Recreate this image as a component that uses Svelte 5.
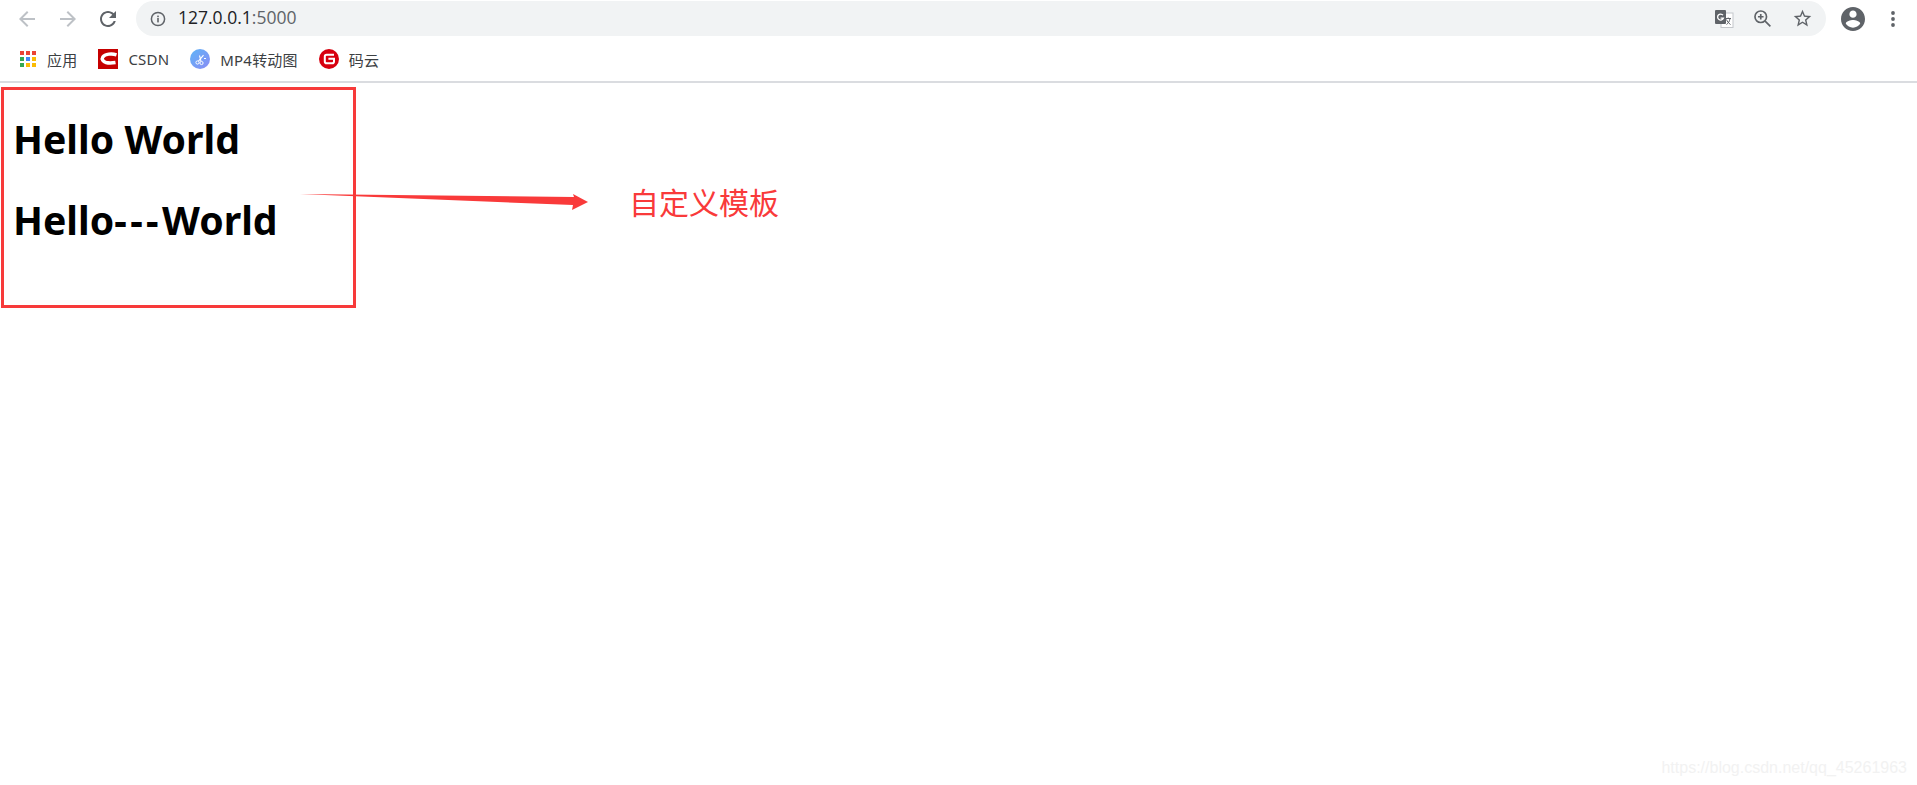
<script lang="ts">
  const bookmarks = [
    { id: "apps", label: "应用" },
    { id: "csdn", label: "CSDN" },
    { id: "mp4", label: "MP4转动图" },
    { id: "gitee", label: "码云" },
  ];
  const appDots = ["#ea4335", "#ea4335", "#ea4335", "#34a853", "#4285f4", "#fbbc05", "#34a853", "#fbbc05", "#fbbc05"];
</script>

<div class="root">
  <header class="chrome">
    <div class="toolbar">
      <svg class="nav" viewBox="0 0 24 24"><path fill="#bdc1c6" d="M20 11H7.83l5.59-5.59L12 4l-8 8 8 8 1.41-1.41L7.83 13H20v-2z" /></svg>
      <svg class="nav" viewBox="0 0 24 24"><path fill="#bdc1c6" d="M12 4l-1.41 1.41L16.17 11H4v2h12.17l-5.58 5.59L12 20l8-8z" /></svg>
      <svg class="nav reload" viewBox="0 0 24 24"><path fill="#5f6368" d="M17.65 6.35C16.2 4.9 14.21 4 12 4c-4.42 0-7.99 3.58-7.99 8s3.57 8 7.99 8c3.73 0 6.84-2.55 7.73-6h-2.08c-.82 2.33-3.04 4-5.65 4-3.31 0-6-2.69-6-6s2.69-6 6-6c1.66 0 3.14.69 4.22 1.78L13 11h7V4l-2.35 2.35z" /></svg>
      <div class="omnibox">
        <svg class="info" viewBox="0 0 16 16">
          <circle cx="8" cy="8" r="6.6" fill="none" stroke="#5f6368" stroke-width="1.5" />
          <rect x="7.2" y="7" width="1.6" height="4.4" fill="#5f6368" />
          <rect x="7.2" y="4.6" width="1.6" height="1.6" fill="#5f6368" />
        </svg>
        <span class="url">127.0.0.1<span class="port">:5000</span></span>
        <div class="omni-actions">
          <svg class="translate" viewBox="0 0 20 20">
            <rect x="7" y="4" width="12" height="14.5" fill="#fff" stroke="#c4c7cb" stroke-width="1" />
            <rect x="1" y="1" width="11" height="14" rx="1" fill="#5f6368" />
            <path d="M9 6.2a3 3 0 1 0 .4 3H6.6" fill="none" stroke="#fff" stroke-width="1.3" />
            <path d="M11.5 9.5h5.5M14.2 8.5v1M12.5 15.5c2-1.5 3-3 3.5-6M12.5 10.5c.8 2 2 3.5 4 5" fill="none" stroke="#5f6368" stroke-width="1" />
          </svg>
          <svg class="action" viewBox="0 0 24 24">
            <circle cx="10" cy="10" r="6.6" fill="none" stroke="#5f6368" stroke-width="1.9" />
            <path d="M15 15l6 6M10 6.8v6.4M6.8 10h6.4" fill="none" stroke="#5f6368" stroke-width="1.9" />
          </svg>
          <svg class="action star" viewBox="0 0 24 24"><path fill="#5f6368" d="M22 9.24l-7.19-.62L12 2 9.19 8.63 2 9.24l5.46 4.73L5.82 21 12 17.27 18.18 21l-1.63-7.03L22 9.24zM12 15.4l-3.76 2.27 1-4.28-3.32-2.88 4.38-.38L12 6.1l1.71 4.04 4.38.38-3.32 2.88 1 4.28L12 15.4z" /></svg>
        </div>
      </div>
      <svg class="account" viewBox="2 2 20 20"><path fill="#5f6368" d="M12 2C6.48 2 2 6.48 2 12s4.48 10 10 10 10-4.48 10-10S17.52 2 12 2zm0 3c1.66 0 3 1.34 3 3s-1.34 3-3 3-3-1.34-3-3 1.34-3 3-3zm0 14.2c-2.5 0-4.71-1.28-6-3.22.03-1.99 4-3.08 6-3.08 1.99 0 5.97 1.09 6 3.08-1.29 1.94-3.5 3.22-6 3.22z" /></svg>
      <svg class="menu" viewBox="0 0 6 18">
        <circle cx="3" cy="3" r="1.9" fill="#5f6368" />
        <circle cx="3" cy="9" r="1.9" fill="#5f6368" />
        <circle cx="3" cy="15" r="1.9" fill="#5f6368" />
      </svg>
    </div>
    <nav class="bookmarks">
      {#each bookmarks as b}
        <div class="bookmark {b.id}">
          {#if b.id === "apps"}
            <div class="app-grid">
              {#each appDots as c}
                <i style={`background:${c}`}></i>
              {/each}
            </div>
          {:else if b.id === "csdn"}
            <svg class="fav" viewBox="0 0 20 20">
              <rect width="20" height="20" fill="#c60000" />
              <path d="M18.5 5.8C14 4.4 7 4.8 4.8 8c-1.5 2.2.3 4.7 3.2 5.5 2.8.7 6.5.5 9.5 0" fill="none" stroke="#fff" stroke-width="3.4" />
            </svg>
          {:else if b.id === "mp4"}
            <svg class="fav" viewBox="0 0 20 20">
              <defs>
                <linearGradient id="mp4-bg" x1="0" y1="0" x2="1" y2="1">
                  <stop offset="0" stop-color="#5fb4f7" />
                  <stop offset="1" stop-color="#8a8cf5" />
                </linearGradient>
              </defs>
              <circle cx="10" cy="10" r="10" fill="url(#mp4-bg)" />
              <circle cx="7.5" cy="13.5" r="1.6" fill="none" stroke="#fff" stroke-width="1" />
              <circle cx="11.5" cy="14" r="1.6" fill="none" stroke="#fff" stroke-width="1" />
              <path d="M8.5 12.2l5-6M11 12.4L9.5 6.5M14 9.5h2" stroke="#fff" stroke-width="1.1" fill="none" />
            </svg>
          {:else}
            <svg class="fav" viewBox="0 0 20 20">
              <circle cx="10" cy="10" r="10" fill="#d7000f" />
              <path d="M15 5.8H7.6a1.8 1.8 0 0 0-1.8 1.8v4.8a1.8 1.8 0 0 0 1.8 1.8h5.6a1.8 1.8 0 0 0 1.8-1.8V9.8H9.4" fill="none" stroke="#fff" stroke-width="2" />
            </svg>
          {/if}
          <span>{b.label}</span>
        </div>
      {/each}
    </nav>
  </header>

  <main class="page">
    <h1>Hello World</h1>
    <h1>Hello<span class="dashes">---</span>World</h1>

    <div class="mark-box"></div>
    <svg class="mark-arrow" viewBox="0 0 300 24">
      <polygon fill="#f93a3a" points="0,2 274,5 273,2 288,10 272,18 273,13" />
    </svg>
    <span class="mark-label">自定义模板</span>
    <span class="watermark">https://blog.csdn.net/qq_45261963</span>
  </main>
</div>

<style>
  :global(body) {
    margin: 0;
    background: #fff;
  }

  .root {
    height: 100vh;
    overflow: hidden;
    display: flex;
    flex-direction: column;
    font-family: "Noto Sans", "Noto Sans CJK SC", sans-serif;
  }

  .chrome {
    flex-shrink: 0;
    border-bottom: 2px solid #dadce0;
  }

  .toolbar {
    height: 37px;
    display: flex;
    align-items: center;
    padding-left: 15px;
  }

  .nav {
    width: 24px;
    height: 24px;
    margin-right: 17px;
  }

  .nav.reload {
    margin-left: -1px;
    margin-right: 18px;
  }

  .omnibox {
    width: 1690px;
    height: 35px;
    margin-left: -2px;
    box-sizing: border-box;
    padding-left: 14px;
    border-radius: 18px;
    background: #f1f3f4;
    display: flex;
    align-items: center;
  }

  .info {
    width: 16px;
    height: 16px;
    margin-right: 12px;
  }

  .url {
    font-family: "Open Sans", "Noto Sans", sans-serif;
    font-size: 17.5px;
    line-height: 33px;
    padding-bottom: 2px;
    color: #202124;
  }

  .port {
    color: #5f6368;
  }

  .omni-actions {
    margin-left: auto;
    margin-right: 13px;
    display: flex;
    align-items: center;
    gap: 18px;
  }

  .star {
    margin-left: 1px;
  }

  .translate {
    width: 20px;
    height: 20px;
  }

  .action {
    width: 21px;
    height: 21px;
  }

  .account {
    width: 24px;
    height: 24px;
    margin-left: 15px;
  }

  .menu {
    width: 6px;
    height: 18px;
    margin-left: 25px;
  }

  .bookmarks {
    height: 44px;
    display: flex;
    align-items: center;
    padding-left: 20px;
    font-size: 15px;
    letter-spacing: 0.2px;
    color: #3c4043;
  }

  .bookmark {
    display: flex;
    align-items: center;
    gap: 10px;
    margin-right: 21px;
  }

  .app-grid {
    width: 16px;
    display: grid;
    grid-template-columns: repeat(3, 4px);
    gap: 2px;
    margin-right: 1px;
  }

  .app-grid i {
    height: 4px;
  }

  .fav {
    width: 20px;
    height: 20px;
  }

  .page {
    position: relative;
    flex: 1;
    padding: 0 13px;
    color: #000;
  }

  h1 {
    margin: 0;
    font-family: "Noto Sans", "Noto Sans CJK SC", sans-serif;
    font-size: 39.2px;
    font-weight: 700;
    line-height: 52px;
    padding-top: 30px;
  }

  h1 + h1 {
    padding-top: 29px;
  }

  .dashes {
    letter-spacing: 3.4px;
  }

  /* annotations drawn over the page */
  .mark-box {
    position: absolute;
    left: 1px;
    top: 4px;
    width: 349px;
    height: 215px;
    border: 3px solid #f73a3a;
  }

  .mark-arrow {
    position: absolute;
    left: 300px;
    top: 109px;
    width: 300px;
    height: 24px;
  }

  .mark-label {
    position: absolute;
    left: 629px;
    top: 98px;
    font-family: "Noto Sans CJK SC", sans-serif;
    font-size: 30px;
    line-height: 40px;
    color: #f93a3a;
  }

  .watermark {
    position: absolute;
    right: 10px;
    bottom: 8px;
    font-family: "Liberation Sans", sans-serif;
    font-size: 16px;
    color: #f2f2f2;
  }
</style>
